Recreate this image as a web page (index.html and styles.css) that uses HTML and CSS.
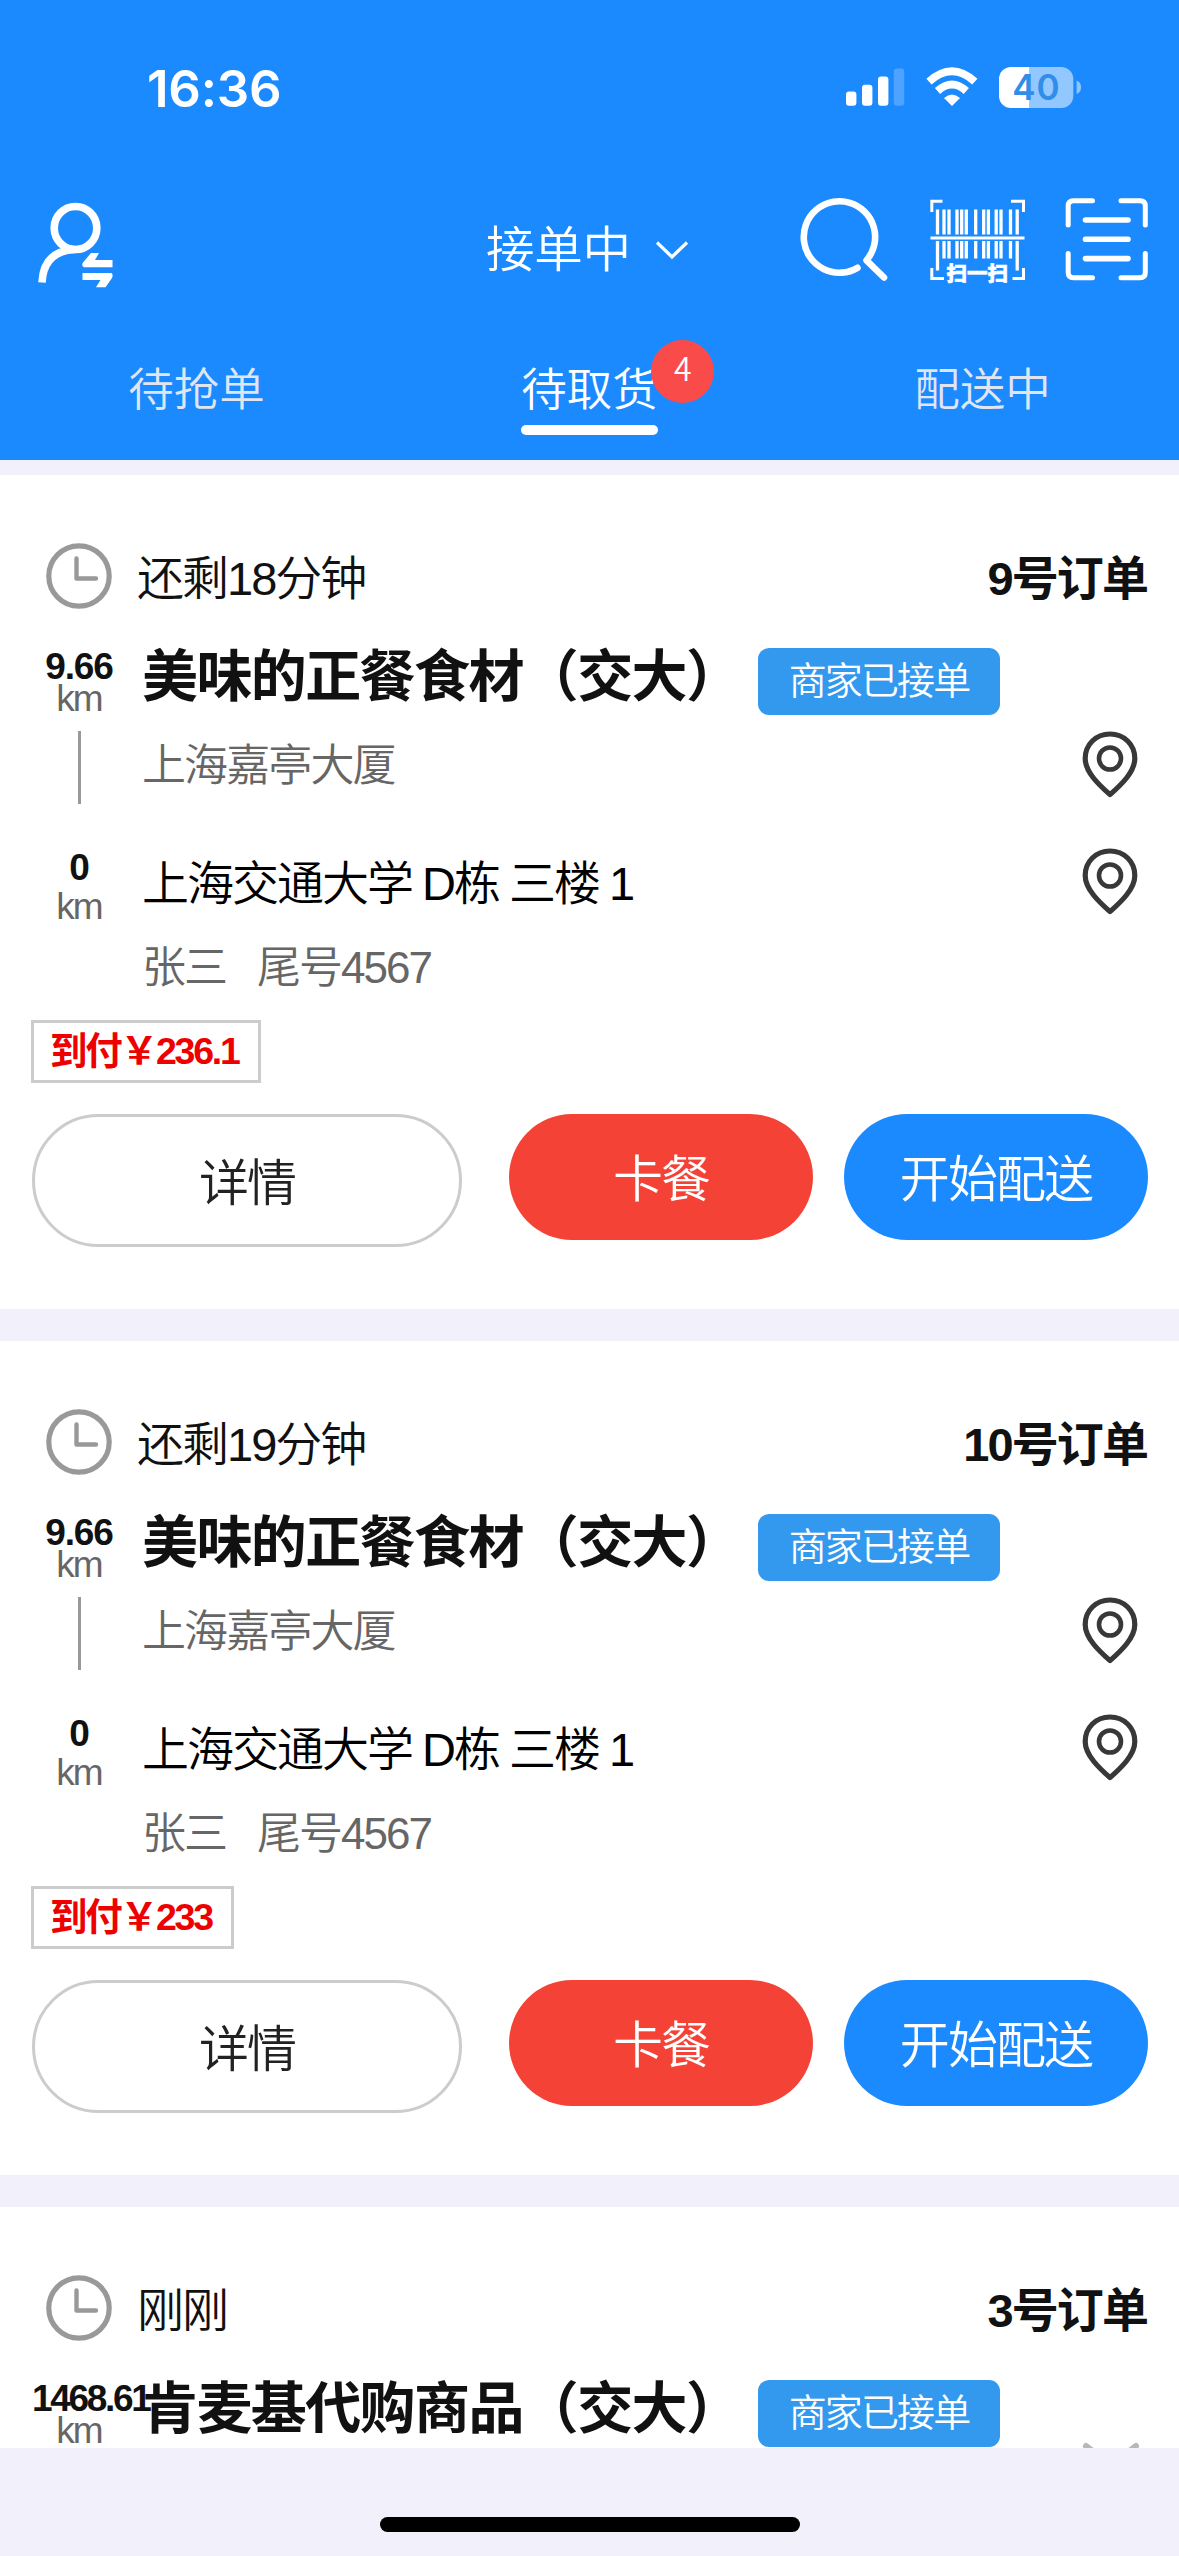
FILE: index.html
```html
<!DOCTYPE html>
<html lang="zh-CN">
<head>
<meta charset="utf-8">
<title>待取货</title>
<link rel="stylesheet" href="styles.css">
</head>
<body>
<svg class="defs" width="0" height="0" aria-hidden="true">
  <symbol id="clock" viewBox="0 0 66 66">
    <circle cx="33" cy="33" r="30.2" fill="none" stroke="#999" stroke-width="5.2"/>
    <path d="M30.5 15.5V35.5H50" fill="none" stroke="#999" stroke-width="4.4" stroke-linecap="round" stroke-linejoin="round"/>
  </symbol>
  <symbol id="pin" viewBox="0 0 56 67">
    <path d="M28 63.6C17 54 3.2 41 3.2 27.5C3.2 13.5 14 3 28 3S52.8 13.5 52.8 27.5C52.8 41 39 54 28 63.6Z" fill="none" stroke="#383838" stroke-width="5.2" stroke-linejoin="round"/>
    <circle cx="28" cy="27.5" r="11" fill="none" stroke="#383838" stroke-width="4.6"/>
  </symbol>
</svg>
<div class="app">
  <header class="header">
    <div class="status">
      <span class="time">16:36</span>
      <svg class="signals" width="236" height="42" viewBox="0 0 236 42">
        <g fill="#fff">
          <rect x="0" y="25.5" width="10.4" height="14.3" rx="3"/>
          <rect x="16" y="18.8" width="10.4" height="21" rx="3"/>
          <rect x="32" y="10.5" width="10.4" height="29.3" rx="3"/>
          <rect x="47.8" y="2.5" width="10.4" height="37.3" rx="3" opacity=".22"/>
        </g>
        <path d="M83 15.6Q106 -5 128.8 15.6" fill="none" stroke="#fff" stroke-width="7.8"/>
        <path d="M91.5 25Q106 12 120.3 25" fill="none" stroke="#fff" stroke-width="7.8"/>
        <path d="M98 32Q106 25 114 32L106 40Z" fill="#fff"/>
        <path d="M165 1H183.300V42H165A12 12 0 0 1 153 30V13A12 12 0 0 1 165 1Z" fill="#fff"/>
        <path d="M183.300 1H215.300A12 12 0 0 1 227.300 13V30A12 12 0 0 1 215.300 42H183.300Z" fill="#fff" opacity=".52"/>
        <path d="M230.600 14.500Q235 16 235 21.200T230.600 28Z" fill="#fff" opacity=".5"/>
        <text x="190.500" y="34.200" text-anchor="middle" class="battery">40</text>
      </svg>
    </div>
    <div class="nav">
      <svg class="user" width="80" height="90" viewBox="35 200 80 90">
        <ellipse cx="75.500" cy="228" rx="21.300" ry="21.500" fill="none" stroke="#fff" stroke-width="7.600"/>
        <path d="M42 282.500Q43.500 251 75 249.500" fill="none" stroke="#fff" stroke-width="7.600"/>
        <path d="M91 253H99L95 260H112.500V267.200H84Q81 266 83 262.500Z" fill="#fff"/>
        <path d="M82.500 273H111.500Q113.500 275 112 278L105.500 287.300H96L100.500 280H82.500Z" fill="#fff"/>
      </svg>
      <div class="state">
        <span>接单中</span>
        <svg width="34" height="20" viewBox="0 0 34 20"><path d="M2 2.500L17 17L32 2.500" fill="none" stroke="#fff" stroke-width="3.200"/></svg>
      </div>
      <div class="actions">
        <svg width="86" height="90" viewBox="799 194.500 86 90">
          <path d="M856.500 268.300A35.700 35.700 0 1 1 865.500 260.800L883 278" fill="none" stroke="#fff" stroke-width="6.600" stroke-linecap="round" stroke-linejoin="round"/>
        </svg>
        <svg class="barcode" width="96" height="90" viewBox="930 194 96 90">
          <g fill="none" stroke="#fff" stroke-width="3">
            <path d="M931.800 212V201.300H942.500M1011 201.300H1023.500V212M931.800 268V278.500H944M1012.500 278.500H1023.500V268"/>
            <path d="M930.500 238H1024.500"/>
          </g>
          <path d="M937.500 209.500V234.500M944 209.500V234.500M949 209.500V234.500M957 209.500V234.500M961.700 209.500V234.500M966.300 209.500V234.500M975.700 209.500V234.500M983.700 209.500V234.500M988.400 209.500V234.500M996.200 209.500V234.500M1001 209.500V234.500M1010.500 209.500V234.500M1017.200 209.500V234.500M937.500 241V270.500M944 241V258.500M949 241V258.500M957 241V258.500M961.700 241V258.500M966.300 241V258.500M975.700 241V258.500M983.700 241V258.500M988.400 241V258.500M996.200 241V258.500M1001 241V258.500M1010.500 241V258.500M1017.200 241V270.500" fill="none" stroke="#fff" stroke-width="3.300"/>
          <text x="977.200" y="281" text-anchor="middle" class="scan">扫一扫</text>
        </svg>
        <svg class="order-scan" width="84" height="90" viewBox="1065 194 84 90">
          <path d="M1068.200 225V206Q1068.200 200.800 1073.500 200.800H1092.500M1121 200.800H1140Q1145.300 200.800 1145.300 206V225M1145.300 253.500V272.500Q1145.300 277.800 1140 277.800H1121M1092.500 277.800H1073.500Q1068.200 277.800 1068.200 272.500V253.500" fill="none" stroke="#fff" stroke-width="5" stroke-linecap="round"/>
          <path d="M1085.500 220H1128M1085.500 239.300H1128M1085.500 258.600H1128" fill="none" stroke="#fff" stroke-width="5.600" stroke-linecap="round"/>
        </svg>
      </div>
    </div>
    <nav class="tabs">
      <div class="tab"><span class="label">待抢单</span></div>
      <div class="tab active"><span class="label">待取货<i class="badge">4</i></span></div>
      <div class="tab"><span class="label">配送中</span></div>
    </nav>
  </header>

  <main class="list">
    <article class="card">
      <div class="head"><svg class="clock"><use href="#clock"/></svg><span class="left">还剩18分钟</span><b class="no">9号订单</b></div>
      <div class="route">
        <div class="dist"><b>9.66</b><span>km</span><i></i></div>
        <div class="place">
          <div class="title"><h2>美味的正餐食材（交大）</h2><span class="tag">商家已接单</span></div>
          <div class="addr"><span>上海嘉亭大厦</span><svg class="pin"><use href="#pin"/></svg></div>
        </div>
      </div>
      <div class="route to">
        <div class="dist"><b>0</b><span>km</span></div>
        <div class="place">
          <div class="dest"><span>上海交通大学 D栋 三楼 1</span><svg class="pin"><use href="#pin"/></svg></div>
          <div class="who"><span>张三</span><span>尾号4567</span></div>
        </div>
      </div>
      <div class="pay">到付￥236.1</div>
      <div class="buttons"><button class="detail">详情</button><button class="stuck">卡餐</button><button class="start">开始配送</button></div>
    </article>

    <article class="card">
      <div class="head"><svg class="clock"><use href="#clock"/></svg><span class="left">还剩19分钟</span><b class="no">10号订单</b></div>
      <div class="route">
        <div class="dist"><b>9.66</b><span>km</span><i></i></div>
        <div class="place">
          <div class="title"><h2>美味的正餐食材（交大）</h2><span class="tag">商家已接单</span></div>
          <div class="addr"><span>上海嘉亭大厦</span><svg class="pin"><use href="#pin"/></svg></div>
        </div>
      </div>
      <div class="route to">
        <div class="dist"><b>0</b><span>km</span></div>
        <div class="place">
          <div class="dest"><span>上海交通大学 D栋 三楼 1</span><svg class="pin"><use href="#pin"/></svg></div>
          <div class="who"><span>张三</span><span>尾号4567</span></div>
        </div>
      </div>
      <div class="pay">到付￥233</div>
      <div class="buttons"><button class="detail">详情</button><button class="stuck">卡餐</button><button class="start">开始配送</button></div>
    </article>

    <article class="card">
      <div class="head"><svg class="clock"><use href="#clock"/></svg><span class="left">刚刚</span><b class="no">3号订单</b></div>
      <div class="route">
        <div class="dist"><b class="far">1468.61</b><span>km</span></div>
        <div class="place">
          <div class="title"><h2>肯麦基代购商品（交大）</h2><span class="tag">商家已接单</span>
            <svg class="peek" width="58" height="30" viewBox="0 0 58 30"><path d="M4 4L29 23L54 4" fill="none" stroke="#b8b8b8" stroke-width="6" stroke-linecap="round"/></svg>
          </div>
        </div>
      </div>
    </article>
  </main>
  <footer class="home"><span></span></footer>
</div>
</body>
</html>
```

FILE: styles.css
```css
* { box-sizing: border-box; }
body {
  margin: 0;
  background: #f2f0fb;
  color: #111;
  font-family: "Liberation Sans", "Noto Sans CJK SC", sans-serif;
  font-weight: 350;
  letter-spacing: -1.9px;
}
.defs { display: block; height: 0; }
svg { display: block; flex: none; overflow: visible; }
.app { width: 1179px; height: 2556px; overflow: hidden; display: flex; flex-direction: column; }

/* header */
.header { flex: none; height: 460px; background: #1c8aff; color: #fff; display: flex; flex-direction: column; }
.status { height: 178px; padding: 66px 97px 0 147px; display: flex; justify-content: space-between; align-items: flex-start; }
.time { padding-top: 1px; font: 600 51px/44px Inter, sans-serif; letter-spacing: -.2px; }
.battery { font: 600 35px Inter, sans-serif; letter-spacing: 1px; fill: #2f8eea; }
.nav { height: 146px; padding: 0 30px 0 35px; display: flex; align-items: flex-start; }
.user { margin-top: 22px; }
.state { margin-left: 371px; padding-top: 48px; display: flex; align-items: center; gap: 24px; font-size: 48.5px; line-height: 48px; letter-spacing: -.2px; }
.actions { margin: 16px 0 0 auto; display: flex; }
.barcode { margin-left: 44px; }
.order-scan { margin-left: 39px; }
.scan { font: 900 20.5px "Noto Sans CJK SC", sans-serif; letter-spacing: 0; fill: #fff; stroke: #fff; stroke-width: .6px; }
.tabs { flex: 1; display: grid; grid-template-columns: repeat(3, 1fr); }
.tab { display: flex; justify-content: center; padding-top: 39px; color: #dfe5f1; }
.label { position: relative; height: 72px; font-size: 45.5px; line-height: 56px; letter-spacing: 0; }
.active { color: #fff; }
.active .label::after { content: ""; display: block; height: 10px; margin-top: 6px; border-radius: 5px; background: #fff; }
.badge { position: absolute; left: 130px; top: -23px; width: 63px; height: 63px; border-radius: 50%; background: #fa4b4b; font: 350 32px/54px "Noto Sans CJK SC", sans-serif; text-align: center; color: #fff; }

/* order list */
.list { flex: none; height: 1988px; padding-top: 15px; overflow: hidden; display: flex; flex-direction: column; gap: 32px; }
.card { flex: none; height: 834px; padding: 68px 31px 0 32px; background: #fff; display: flex; flex-direction: column; }
.head { height: 66px; padding-left: 14px; display: flex; align-items: center; font-size: 47px; line-height: 66px; }
.clock { width: 66px; height: 66px; margin-right: 25px; }
.left { padding-top: 6px; letter-spacing: -2px; }
.no { margin-left: auto; padding: 6px 1px 0 0; }
.route { display: flex; height: 233px; padding-top: 39px; }
.dist { flex: none; width: 94px; margin-right: 16px; display: flex; flex-direction: column; align-items: center; font-size: 37px; line-height: 31px; color: #666; }
.dist b { color: #111; height: 36px; line-height: 37px; letter-spacing: -1.1px; }
.dist .far { align-self: flex-start; letter-spacing: -2.3px; }
.dist span { height: 30px; line-height: 30px; }
.dist i { width: 3px; height: 73px; margin-top: 17px; background: #999; }
.place { flex: 1; min-width: 0; }
.title { display: flex; height: 66px; }
.title h2 { margin: 0; width: 616px; font-size: 56px; line-height: 57px; letter-spacing: -1.6px; white-space: nowrap; }
.tag { width: 242px; height: 67px; border-radius: 11px; background: #3399ef; color: #fff; font-size: 38px; line-height: 67px; text-align: center; }
.peek { margin: 62px 8px 0 auto; }
.addr, .dest { display: flex; justify-content: space-between; padding-right: 10px; }
.addr { padding-top: 17px; font-size: 44px; line-height: 70px; color: #666; }
.pin { width: 56px; height: 67px; }
.to { height: 178px; padding-top: 6px; }
.to .dist { padding-top: 1px; }
.to .dist span { margin-top: 7px; }
.dest { font-size: 47px; line-height: 71px; letter-spacing: -2px; word-spacing: -1px; color: #000; }
.who { display: flex; gap: 31px; padding-top: 16px; font-size: 44px; line-height: 65px; letter-spacing: -2px; color: #666; }
.pay { align-self: flex-start; height: 63px; margin-left: -1px; padding: 0 19px 0 16px; border: 3px solid #ccc; font-size: 37.5px; line-height: 57px; letter-spacing: -2.2px; font-weight: 700; color: #ee0000; }
.buttons { display: flex; margin-top: 31px; }
button { height: 126px; padding: 0 0 4px; border: 0; border-radius: 67px; font: 350 50px "Liberation Sans", "Noto Sans CJK SC", sans-serif; letter-spacing: -1.9px; color: #fff; }
.detail { width: 430px; height: 133px; border: 3px solid #ccc; background: #fff; color: #222; }
.stuck { width: 304px; margin-left: 47px; background: #f44336; }
.start { width: 304px; margin-left: 31px; background: #1c8aff; }

.home { flex: 1; display: flex; justify-content: center; padding-top: 69px; }
.home span { width: 420px; height: 15px; border-radius: 8px; background: #000; }
```
